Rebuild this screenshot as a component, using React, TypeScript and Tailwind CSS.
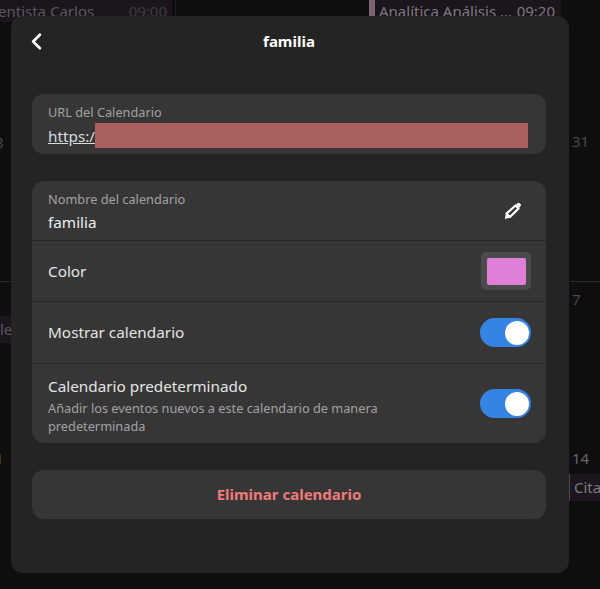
import { ChevronLeft } from "lucide-react";

const font = { fontFamily: '"Noto Sans", sans-serif' };

function Toggle() {
  return (
    <div className="flex h-[29px] w-[51px] shrink-0 items-center justify-end rounded-full bg-[#3584e4] pr-[2px]">
      <div className="h-[24px] w-[24px] rounded-full bg-white" />
    </div>
  );
}

function Pencil() {
  return (
    <svg width="18" height="18" viewBox="0 0 18 18" fill="none">
      <path d="M2.5 11.5 L11.5 3.5 L14.5 6.5 L6 15 Z" stroke="#fff" strokeWidth="2.2" strokeLinejoin="round" />
      <path d="M0.8 17 L1.8 12 L5.8 15.8 Z" fill="#fff" />
      <path d="M12 2.5 L13.5 1.2 a1.6 1.6 0 0 1 2.2 0 L16.5 2 a1.6 1.6 0 0 1 0 2.2 L15.2 5.8 Z" fill="#fff" />
    </svg>
  );
}

function Backdrop() {
  return (
    <div className="absolute inset-0 overflow-hidden text-[15px] text-[#5c585e]">
      <div className="absolute left-0 top-0 flex h-[22px] w-[172px] items-center justify-between bg-[#1c151d] pr-[5px]">
        <span className="-ml-[2px] whitespace-nowrap">entista Carlos</span>
        <span className="text-[#3e3b3f]">09:00</span>
      </div>
      <div className="absolute left-[175px] top-0 h-[16px] w-px bg-[#1c1c1c]" />
      <div className="absolute left-[369px] top-0 flex h-[22px] w-[192px] items-center justify-between border-l-[6px] border-[#7a6470] bg-[#1c151d] pl-[4px] pr-[6px] text-[#7d7a80]">
        <span className="whitespace-nowrap">Analítica Análisis ...</span>
        <span>09:20</span>
      </div>
      <span className="absolute left-[-5px] top-[131px] text-[#4c484c]">8</span>
      <span className="absolute left-[572px] top-[130px] text-[#4c484c]">31</span>
      <div className="absolute left-[570px] top-[281px] h-px w-[30px] bg-[#2a2a2a]" />
      <div className="absolute left-0 top-[281px] h-px w-[11px] bg-[#2a2a2a]" />
      <span className="absolute left-[572px] top-[288px] text-[#4c484c]">7</span>
      <div className="absolute left-0 top-[316px] flex h-[27px] w-[11px] items-center overflow-hidden bg-[#1c151d]">
        <span>le</span>
      </div>
      <span className="absolute left-[-5px] top-[447px] text-[#6a666a]">1</span>
      <span className="absolute left-[572px] top-[447px] text-[#6a666a]">14</span>
      <div className="absolute left-[569px] top-[474px] flex h-[27px] w-[31px] items-center overflow-hidden border-l border-[#4c484c] bg-[#1c151d] pl-[4px] text-[#7d7a80]">
        <span>Cita</span>
      </div>
    </div>
  );
}

export default function App() {
  return (
    <div className="relative h-[589px] w-[600px] overflow-hidden bg-[#0e0e0e]" style={font}>
      <Backdrop />
      <div className="relative ml-[11px] flex h-[589px] items-start pt-[16px]">
        <div className="h-[557px] w-[558px] rounded-[12px] bg-[#242424] pl-[21px] pr-[23px] text-white">
          <div className="relative flex h-[50px] items-center justify-center">
            <ChevronLeft className="absolute left-[-9px] top-[12px]" size={27} strokeWidth={2.4} />
            <span className="text-[15px] font-bold">familia</span>
          </div>

          <div className="mt-[28px] flex h-[60px] flex-col rounded-[12px] bg-[#363636] px-[16px] pt-[10px]">
            <span className="text-[12.75px] leading-[16px] text-[#a3a1a3]">URL del Calendario</span>
            <div className="relative mt-[4px] h-[24px] text-[15.3px] leading-[24px] text-[#d8dde0]">
              <span className="underline">https:/</span>
              <div className="absolute left-[47px] top-[-1px] h-[25px] w-[433px] bg-[#ab6060]" />
            </div>
          </div>

          <div className="mt-[27px] flex flex-col divide-y divide-[#262626] rounded-[12px] bg-[#363636]">
            <div className="flex h-[60px] justify-between pl-[16px] pr-[24px]">
              <div className="flex flex-col pt-[10px]">
                <span className="text-[12.75px] leading-[16px] text-[#a3a1a3]">Nombre del calendario</span>
                <span className="mt-[3px] text-[15.3px] leading-[24px] text-[#eceff1]">familia</span>
              </div>
              <div className="pt-[21px]">
                <Pencil />
              </div>
            </div>
            <div className="flex h-[61px] items-center justify-between pl-[16px] pr-[15px]">
              <span className="text-[15.3px] text-[#e4e4e4]">Color</span>
              <div className="flex h-[38px] w-[50px] items-center justify-center rounded-[5px] bg-[#4a4a4c]">
                <div className="h-[27px] w-[39px] rounded-[2px] bg-[#e07fd8]" />
              </div>
            </div>
            <div className="flex h-[62px] items-center justify-between pl-[16px] pr-[15px]">
              <span className="text-[15.3px] text-[#e4e4e4]">Mostrar calendario</span>
              <Toggle />
            </div>
            <div className="flex h-[79px] items-center justify-between pl-[16px] pr-[15px]">
              <div className="flex h-full w-[400px] flex-col pt-[11px]">
                <span className="text-[15.3px] leading-[22px] text-[#e4e4e4]">Calendario predeterminado</span>
                <span className="mt-[2px] text-[12.75px] leading-[18px] text-[#a3a1a3]">
                  Añadir los eventos nuevos a este calendario de manera predeterminada
                </span>
              </div>
              <Toggle />
            </div>
          </div>

          <div className="mt-[27px] flex h-[49px] items-center justify-center rounded-[12px] bg-[#363636]">
            <span className="text-[15px] font-bold text-[#f07a7a]">Eliminar calendario</span>
          </div>
        </div>
      </div>
    </div>
  );
}
